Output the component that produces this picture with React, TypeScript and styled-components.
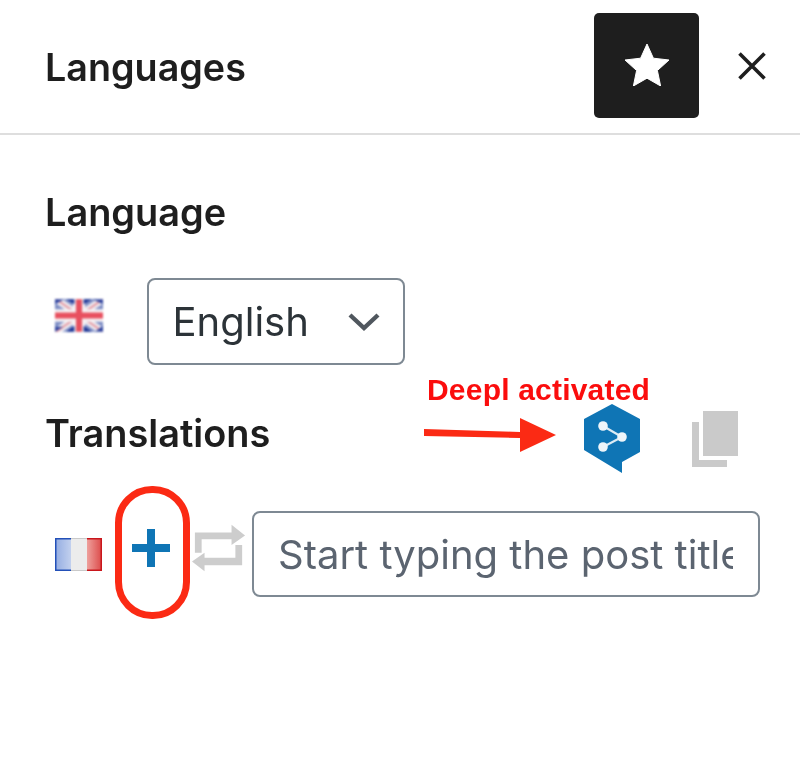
import React from "react";
import styled, { createGlobalStyle } from "styled-components";

const Global = createGlobalStyle`
  html, body { margin: 0; padding: 0; background: #fff; }
  body { font-family: Inter, "Liberation Sans", sans-serif; color: #1e1e1e; }
`;

const Page = styled.div`
  position: relative;
  width: 800px;
  height: 762px;
  overflow: hidden;
  background: #fff;
  filter: blur(0.45px);
`;

const Header = styled.header`
  box-sizing: border-box;
  border-bottom: 2px solid #dedede;
  height: 135px;
  padding: 13px 34px 0 45px;
  display: flex;
  align-items: flex-start;
`;

const PanelTitle = styled.h1`
  margin: 0;
  flex: 1;
  font-size: 37.7px;
  line-height: 108px;
  font-weight: 600;
`;

const StarButton = styled.button`
  width: 105px;
  height: 105px;
  border: 0;
  padding: 0 0 2px;
  border-radius: 5px;
  background: #1e1e1e;
  display: flex;
  align-items: center;
  justify-content: center;
`;

const CloseButton = styled.button`
  width: 28px;
  height: 28px;
  margin: 39px 0 0 39px;
  padding: 0;
  border: 0;
  background: none;
  display: flex;
`;

const Body = styled.main`
  padding: 57px 40px 0 45px;
  display: flex;
  flex-direction: column;
`;

const SectionTitle = styled.h2`
  margin: 0;
  font-size: 37.9px;
  line-height: 40px;
  font-weight: 600;
`;

const LanguageRow = styled.div`
  margin-top: 46px;
  display: flex;
  align-items: flex-start;
`;

const FlagSlot = styled.div<{ $top: number }>`
  width: 102px;
  padding: ${(p) => p.$top}px 0 0 10px;
  box-sizing: border-box;
  flex: none;
  display: flex;
`;

const SelectBox = styled.div`
  width: 258px;
  height: 87px;
  box-sizing: border-box;
  border: 2px solid #7e8993;
  border-radius: 8px;
  padding: 0 23px 0 23.5px;
  display: flex;
  align-items: center;
  justify-content: space-between;
  font-size: 40px;
  color: #2c3338;
`;

const TranslationsHead = styled.div`
  margin-top: 48px;
  height: 40px;
  display: flex;
  align-items: center;
`;

const TranslationRow = styled.div`
  margin-top: 58px;
  display: flex;
  align-items: center;
`;

const FrenchSlot = styled.div`
  width: 87px;
  padding: 0 0 0 10px;
  box-sizing: border-box;
  flex: none;
  display: flex;
`;

const AddIcon = styled.div`
  width: 38px;
  height: 38px;
  flex: none;
  display: flex;
  margin-top: -13px;
`;

const SyncIcon = styled.div`
  margin: -12px 6px 0 22px;
  width: 54px;
  height: 48px;
  flex: none;
  display: flex;
`;

const TitleInput = styled.div`
  width: 508px;
  height: 86px;
  box-sizing: border-box;
  border: 2px solid #7e8993;
  border-radius: 8px;
  padding: 1px 25px 0 24px;
  display: flex;
  align-items: center;
  font-size: 40px;
  color: #5b6470;
  overflow: hidden;
`;

const InputText = styled.span`
  white-space: nowrap;
  overflow: hidden;
  display: block;
  width: 100%;
`;

const AnnotationLabel = styled.div`
  position: absolute;
  left: 427px;
  top: 373px;
  font-family: "Liberation Sans", Arial, sans-serif;
  font-weight: 700;
  font-size: 30px;
  letter-spacing: 0.2px;
  line-height: 34px;
  color: #fb0d0d;
  white-space: nowrap;
`;

const OverlayIcon = styled.div<{ $x: number; $y: number; $w: number; $h: number }>`
  position: absolute;
  left: ${(p) => p.$x}px;
  top: ${(p) => p.$y}px;
  width: ${(p) => p.$w}px;
  height: ${(p) => p.$h}px;
  display: flex;
`;

const Pill = styled.div`
  position: absolute;
  left: 115px;
  top: 486px;
  width: 75px;
  height: 133px;
  box-sizing: border-box;
  border: 7px solid #fb2a14;
  border-radius: 37px;
`;

const UkFlag = () => (
  <svg width="48" height="33" viewBox="0 0 47 32" style={{ filter: "blur(1px)" }}>
    <rect width="47" height="32" fill="#7f8fc6" />
    <path d="M1 0 L47 32 M47 0 L1 32" stroke="#f1eef2" strokeWidth="7" />
    <path d="M1 0 L47 32 M47 0 L1 32" stroke="#e39aa4" strokeWidth="2" />
    <path d="M23.5 0V32M0 16H47" stroke="#f6f2f4" strokeWidth="12" />
    <path d="M23.5 0V32M0 16H47" stroke="#e8505f" strokeWidth="6" />
    <path d="M0 27H8L0 32ZM39 32 47 26V32ZM37 0 47 0 47 5ZM0 0H9L0 5Z" fill="#2f45a0" />
    <path d="M11 32 19 26V32ZM28 32V26L36 32ZM11 0H19V5ZM28 0H36L28 5Z" fill="#1f3796" />
  </svg>
);

const FrFlag = () => (
  <svg width="47" height="33" viewBox="0 0 47 33" style={{ filter: "blur(0.7px)" }}>
    <defs>
      <linearGradient id="frBlue" x1="0" x2="1" y1="0" y2="0">
        <stop offset="0" stopColor="#96aee2" />
        <stop offset="1" stopColor="#c2d0ee" />
      </linearGradient>
      <linearGradient id="frRed" x1="0" x2="1" y1="0" y2="0">
        <stop offset="0" stopColor="#eea09c" />
        <stop offset="1" stopColor="#dd4f4e" />
      </linearGradient>
    </defs>
    <rect x="0.5" y="0.5" width="46" height="32" fill="#ececec" />
    <rect x="1" y="1" width="15" height="31" fill="url(#frBlue)" />
    <rect x="32" y="1" width="14" height="31" fill="url(#frRed)" />
    <path d="M16 0.7H0.7V32.3H16" fill="none" stroke="#2350b8" strokeWidth="1.6" />
    <path d="M32 0.7H46.3V32.3H32" fill="none" stroke="#c9161c" strokeWidth="1.6" />
    <path d="M16 0.5H32M16 32.5H32" stroke="#c9c9c9" strokeWidth="1" />
  </svg>
);

const DeepL = () => (
  <svg width="57" height="69" viewBox="0 0 57 69">
    <path d="M29 0 57 15V48L39 58V69L1 46V15Z" fill="#0f75b5" />
    <path d="M20 22 39 33 20 43" fill="none" stroke="#dcebf4" strokeWidth="2.2" />
    <circle cx="20" cy="22" r="4.8" fill="#eef5fa" />
    <circle cx="39" cy="33" r="4.8" fill="#eef5fa" />
    <circle cx="20" cy="43" r="4.8" fill="#eef5fa" />
  </svg>
);

export default function App() {
  return (
    <Page>
      <Global />
      <Header>
        <PanelTitle>Languages</PanelTitle>
        <StarButton aria-label="Star">
          <svg width="44" height="42" viewBox="0 0 44 42">
            <path
              d="M22 0 28.4 14.2 44 16 32.4 26.5 35.6 42 22 34.2 8.4 42 11.6 26.5 0 16 15.6 14.2Z"
              fill="#fff"
              stroke="#fff"
              strokeLinejoin="round"
            />
          </svg>
        </StarButton>
        <CloseButton aria-label="Close">
          <svg width="28" height="28" viewBox="0 0 28 28">
            <path d="M1.5 1.5 26.5 26.5M26.5 1.5 1.5 26.5" stroke="#1e1e1e" strokeWidth="3.6" fill="none" />
          </svg>
        </CloseButton>
      </Header>
      <Body>
        <SectionTitle>Language</SectionTitle>
        <LanguageRow>
          <FlagSlot $top={21}>
            <UkFlag />
          </FlagSlot>
          <SelectBox>
            <span>English</span>
            <svg width="32" height="20" viewBox="0 0 32 20">
              <path d="M2 3 16 16 30 3" stroke="#50575e" strokeWidth="4.4" fill="none" />
            </svg>
          </SelectBox>
        </LanguageRow>
        <TranslationsHead>
          <SectionTitle>Translations</SectionTitle>
        </TranslationsHead>
        <TranslationRow>
          <FrenchSlot>
            <FrFlag />
          </FrenchSlot>
          <AddIcon>
            <svg width="38" height="38" viewBox="0 0 38 38">
              <path d="M19 0V38M0 19H38" stroke="#0f75b5" strokeWidth="8" fill="none" />
            </svg>
          </AddIcon>
          <SyncIcon>
            <svg width="56" height="48" viewBox="0 0 56 48">
              <path
                d="M3 29V8H41V0L55 11 41 21V15H10V29ZM52 21V42H13V48L0 38 13 29V34H45V21Z"
                fill="#cdcdcd"
              />
            </svg>
          </SyncIcon>
          <TitleInput>
            <InputText>Start typing the post title</InputText>
          </TitleInput>
        </TranslationRow>
      </Body>

      <AnnotationLabel>Deepl activated</AnnotationLabel>
      <OverlayIcon $x={424} $y={416} $w={135} $h={38}>
        <svg width="135" height="38" viewBox="0 0 135 38">
          <path d="M0 13 96 16V2L132 19 96 36V22L0 20Z" fill="#fb2a14" />
        </svg>
      </OverlayIcon>
      <OverlayIcon $x={583} $y={404} $w={57} $h={69}>
        <DeepL />
      </OverlayIcon>
      <OverlayIcon $x={692} $y={410} $w={46} $h={57}>
        <svg width="46" height="57" viewBox="0 0 46 57">
          <path d="M11 1H46V46H11Z" fill="#cacaca" />
          <path d="M0 12H7V50H35V57H0Z" fill="#cacaca" />
        </svg>
      </OverlayIcon>
      <Pill />
    </Page>
  );
}
